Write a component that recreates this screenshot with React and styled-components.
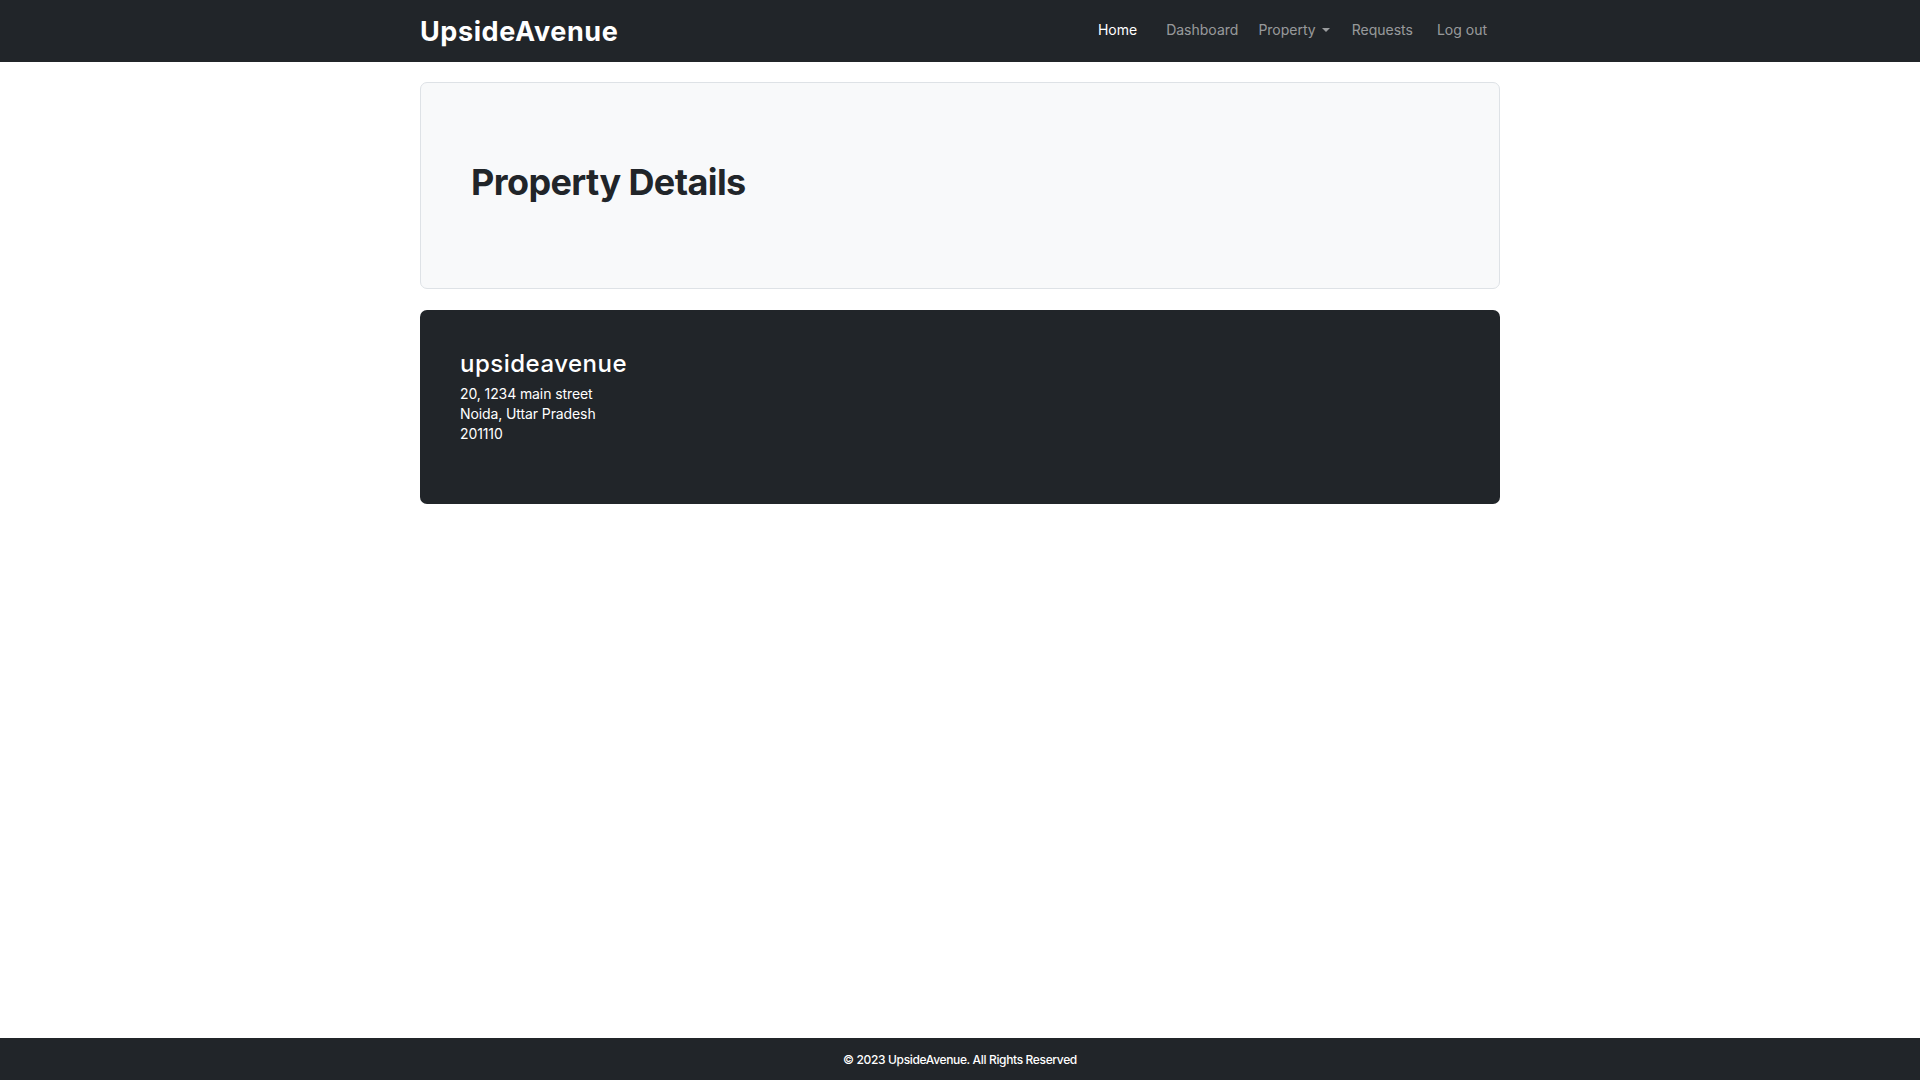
import React from 'react';
import styled, { createGlobalStyle } from 'styled-components';

const GlobalStyle = createGlobalStyle`
  * { box-sizing: border-box; }
  body {
    margin: 0;
    font-family: Inter, "Open Sans", sans-serif;
    color: #212529;
    background: #fff;
  }
`;

const Page = styled.div`
  min-height: 100vh;
  display: flex;
  flex-direction: column;
`;

const Navbar = styled.nav`
  background-color: #212529;
  height: 62px;
`;

const Container = styled.div`
  width: 1080px;
  margin: 0 auto;
`;

const NavInner = styled(Container)`
  height: 100%;
  display: flex;
  align-items: center;
  justify-content: space-between;
`;

const Brand = styled.a`
  font-size: 27px;
  font-weight: 700;
  color: #fff;
  text-decoration: none;
  letter-spacing: 0.6px;
`;

const NavList = styled.ul`
  list-style: none;
  margin: 0 0 4px;
  padding: 0;
  display: flex;
  align-items: center;
`;

const NavLink = styled.a`
  display: block;
  font-size: 14px;
  padding: 8px ${props => props.$pr}px 8px ${props => props.$pl}px;
  color: ${props => (props.$active ? '#fff' : 'rgba(255, 255, 255, 0.55)')};
  text-decoration: none;
  cursor: pointer;
`;

const Caret = styled.span`
  display: inline-block;
  margin-left: 6px;
  vertical-align: 3px;
  border-top: 4px solid currentColor;
  border-left: 4px solid transparent;
  border-right: 4px solid transparent;
`;

const Main = styled(Container)`
  flex: 1;
  padding-top: 20px;
`;

const Jumbotron = styled.section`
  height: 207px;
  background-color: #f8f9fa;
  border: 1px solid #dee2e6;
  border-radius: 7px;
  display: flex;
  align-items: center;
  padding: 0 50px 7px;
`;

const PageTitle = styled.h1`
  margin: 0;
  font-size: 36px;
  font-weight: 700;
  letter-spacing: -0.6px;
  color: #212529;
`;

const PropertyCard = styled.section`
  margin-top: 21px;
  height: 194px;
  background-color: #212529;
  color: #fff;
  border-radius: 7px;
  padding: 39px 40px;
`;

const PropertyName = styled.h3`
  margin: 0 0 6px;
  font-size: 24px;
  font-weight: 500;
  letter-spacing: 0.5px;
`;

const AddressLine = styled.div`
  font-size: 14px;
  line-height: 20px;
  letter-spacing: -0.1px;
`;

const Footer = styled.footer`
  background-color: #212529;
  color: #fff;
  height: 42px;
  display: flex;
  align-items: center;
  justify-content: center;
  font-size: 12px;
  font-weight: 500;
  letter-spacing: -0.35px;
`;

const navItems = [
  { label: 'Home', active: true, pl: 12, pr: 19 },
  { label: 'Dashboard', pl: 10, pr: 10 },
  { label: 'Property', dropdown: true, pl: 10, pr: 10 },
  { label: 'Requests', pl: 12, pr: 12 },
  { label: 'Log out', pl: 12, pr: 13 },
];

export default function App() {
  return (
    <Page>
      <GlobalStyle />
      <Navbar>
        <NavInner>
          <Brand href="#">UpsideAvenue</Brand>
          <NavList>
            {navItems.map(item => (
              <li key={item.label}>
                <NavLink $active={item.active} $pl={item.pl} $pr={item.pr}>
                  {item.label}
                  {item.dropdown && <Caret />}
                </NavLink>
              </li>
            ))}
          </NavList>
        </NavInner>
      </Navbar>

      <Main>
        <Jumbotron>
          <PageTitle>Property Details</PageTitle>
        </Jumbotron>

        <PropertyCard>
          <PropertyName>upsideavenue</PropertyName>
          <AddressLine>20, 1234 main street</AddressLine>
          <AddressLine>Noida, Uttar Pradesh</AddressLine>
          <AddressLine>201110</AddressLine>
        </PropertyCard>
      </Main>

      <Footer>© 2023 UpsideAvenue. All Rights Reserved</Footer>
    </Page>
  );
}
